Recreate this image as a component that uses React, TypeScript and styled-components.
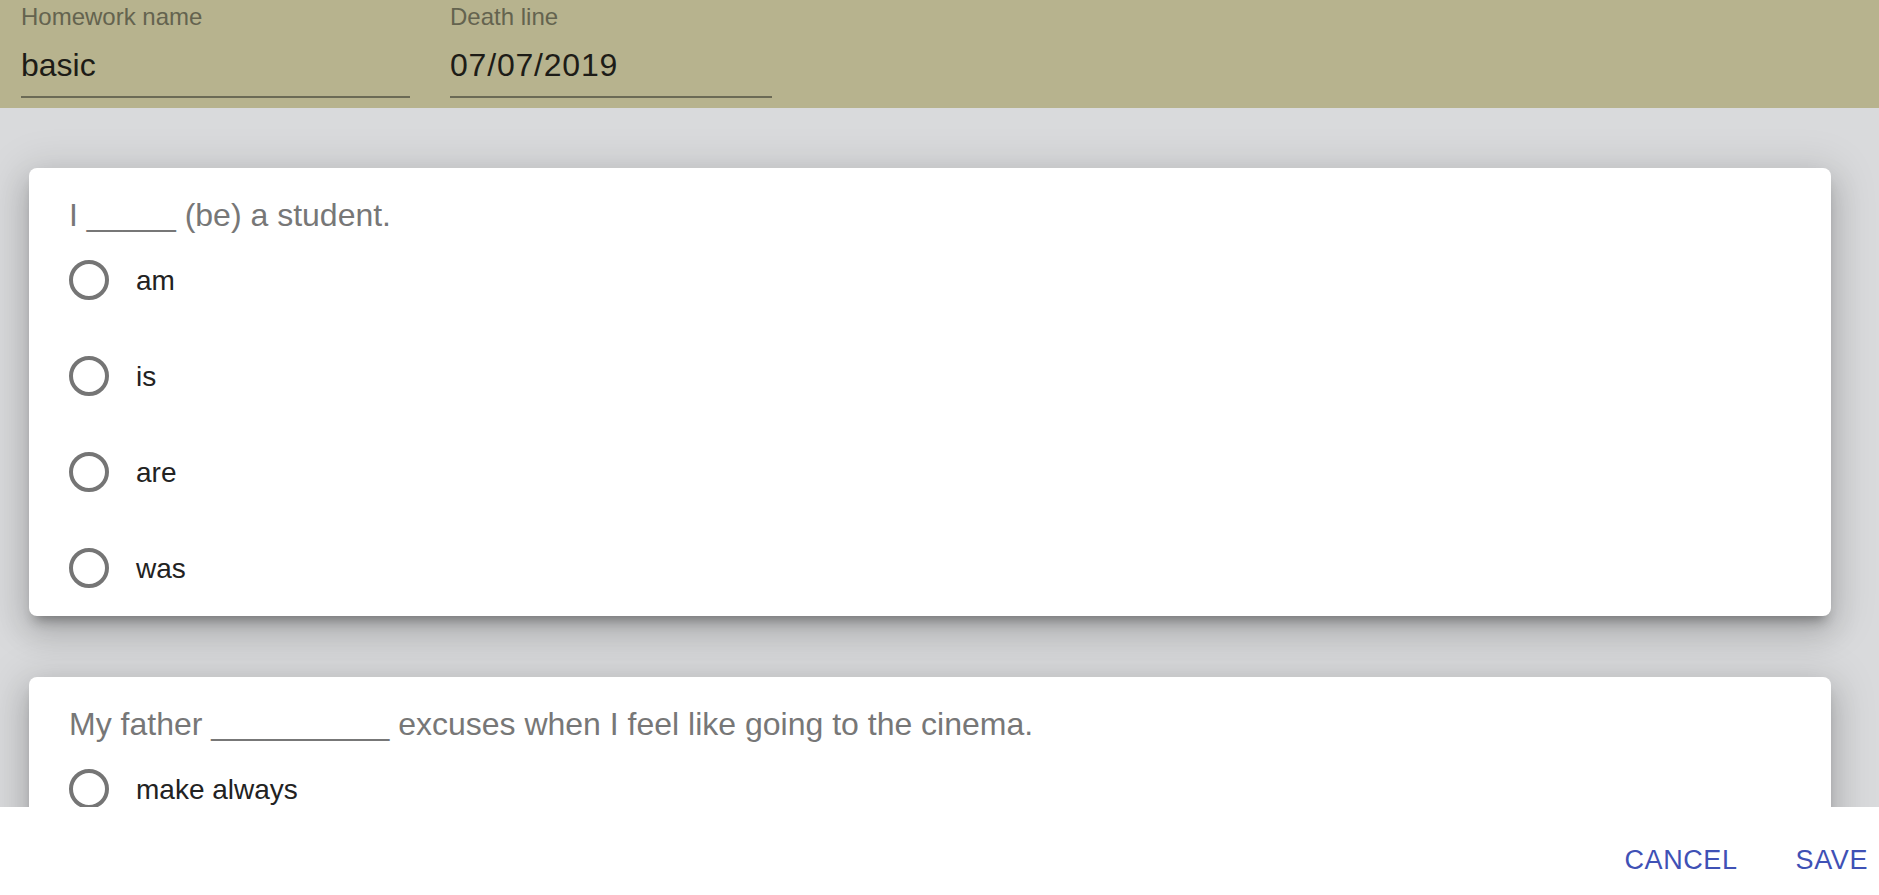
import React from "react";
import styled, { createGlobalStyle } from "styled-components";

const GlobalStyle = createGlobalStyle`
  html, body {
    margin: 0;
    padding: 0;
    height: 100%;
    overflow: hidden;
    font-family: "Liberation Sans", Arial, sans-serif;
  }
  #root { height: 100%; }
  * { box-sizing: border-box; }
`;

const Page = styled.div`
  display: flex;
  flex-direction: column;
  height: 100vh;
  background: #d9dadc;
`;

const Header = styled.header`
  flex: 0 0 108px;
  display: flex;
  gap: 40px;
  padding: 3px 0 10px 21px;
  background: #b7b38e;
`;

const Field = styled.div<{ $width: number }>`
  display: flex;
  flex-direction: column;
  width: ${(p) => p.$width}px;
`;

const FieldLabel = styled.div`
  font-size: 24px;
  line-height: 28px;
  color: #64634f;
`;

const FieldValue = styled.div<{ $spacing?: number }>`
  margin-top: 14px;
  padding-bottom: 11px;
  font-size: 32px;
  line-height: 40px;
  letter-spacing: ${(p) => p.$spacing ?? 0}px;
  color: #1d1c17;
  border-bottom: 2px solid #6b6a55;
`;

const Content = styled.main`
  flex: 1 1 auto;
  overflow: hidden;
  display: flex;
  flex-direction: column;
  gap: 61px;
  padding: 60px 48px 0 29px;
`;

const Card = styled.section`
  flex: 0 0 auto;
  background: #ffffff;
  border-radius: 8px;
  padding: 31px 0 0 40px;
  box-shadow: 0px 10px 12px -6px rgba(0, 0, 0, 0.32),
    0px 16px 30px 2px rgba(0, 0, 0, 0.14),
    0px 6px 40px 10px rgba(0, 0, 0, 0.1);
`;

const Question = styled.div`
  font-size: 32px;
  line-height: 33px;
  color: #777777;
`;

const OptionRow = styled.label`
  display: flex;
  align-items: center;
  height: 96px;
  gap: 27px;
  cursor: pointer;
`;

const RadioCircle = styled.span`
  flex: 0 0 40px;
  width: 40px;
  height: 40px;
  border: 4px solid #757575;
  border-radius: 50%;
`;

const OptionText = styled.span`
  font-size: 28px;
  line-height: 32px;
  padding-top: 1px;
  color: #222222;
`;

const Footer = styled.footer`
  flex: 0 0 88px;
  display: flex;
  justify-content: flex-end;
  align-items: flex-start;
  gap: 42px;
  padding: 36px 3px 0 0;
  background: #ffffff;
`;

const TextButton = styled.button`
  border: none;
  background: none;
  padding: 0 8px;
  font-family: "Liberation Sans", Arial, sans-serif;
  font-size: 27px;
  line-height: 34px;
  letter-spacing: 0.6px;
  text-transform: uppercase;
  color: #3f51b5;
  cursor: pointer;
`;

type Item = { question: string; options: string[] };

const items: Item[] = [
  { question: "I _____ (be) a student.", options: ["am", "is", "are", "was"] },
  {
    question: "My father __________ excuses when I feel like going to the cinema.",
    options: ["make always", "always make", "always makes", "makes always"],
  },
];

export default function App() {
  return (
    <>
      <GlobalStyle />
      <Page>
        <Header>
          <Field $width={389}>
            <FieldLabel>Homework name</FieldLabel>
            <FieldValue>basic</FieldValue>
          </Field>
          <Field $width={322}>
            <FieldLabel>Death line</FieldLabel>
            <FieldValue $spacing={0.8}>07/07/2019</FieldValue>
          </Field>
        </Header>
        <Content>
          {items.map((item) => (
            <Card key={item.question}>
              <Question>{item.question}</Question>
              {item.options.map((opt) => (
                <OptionRow key={opt}>
                  <RadioCircle />
                  <OptionText>{opt}</OptionText>
                </OptionRow>
              ))}
            </Card>
          ))}
        </Content>
        <Footer>
          <TextButton>Cancel</TextButton>
          <TextButton>Save</TextButton>
        </Footer>
      </Page>
    </>
  );
}
